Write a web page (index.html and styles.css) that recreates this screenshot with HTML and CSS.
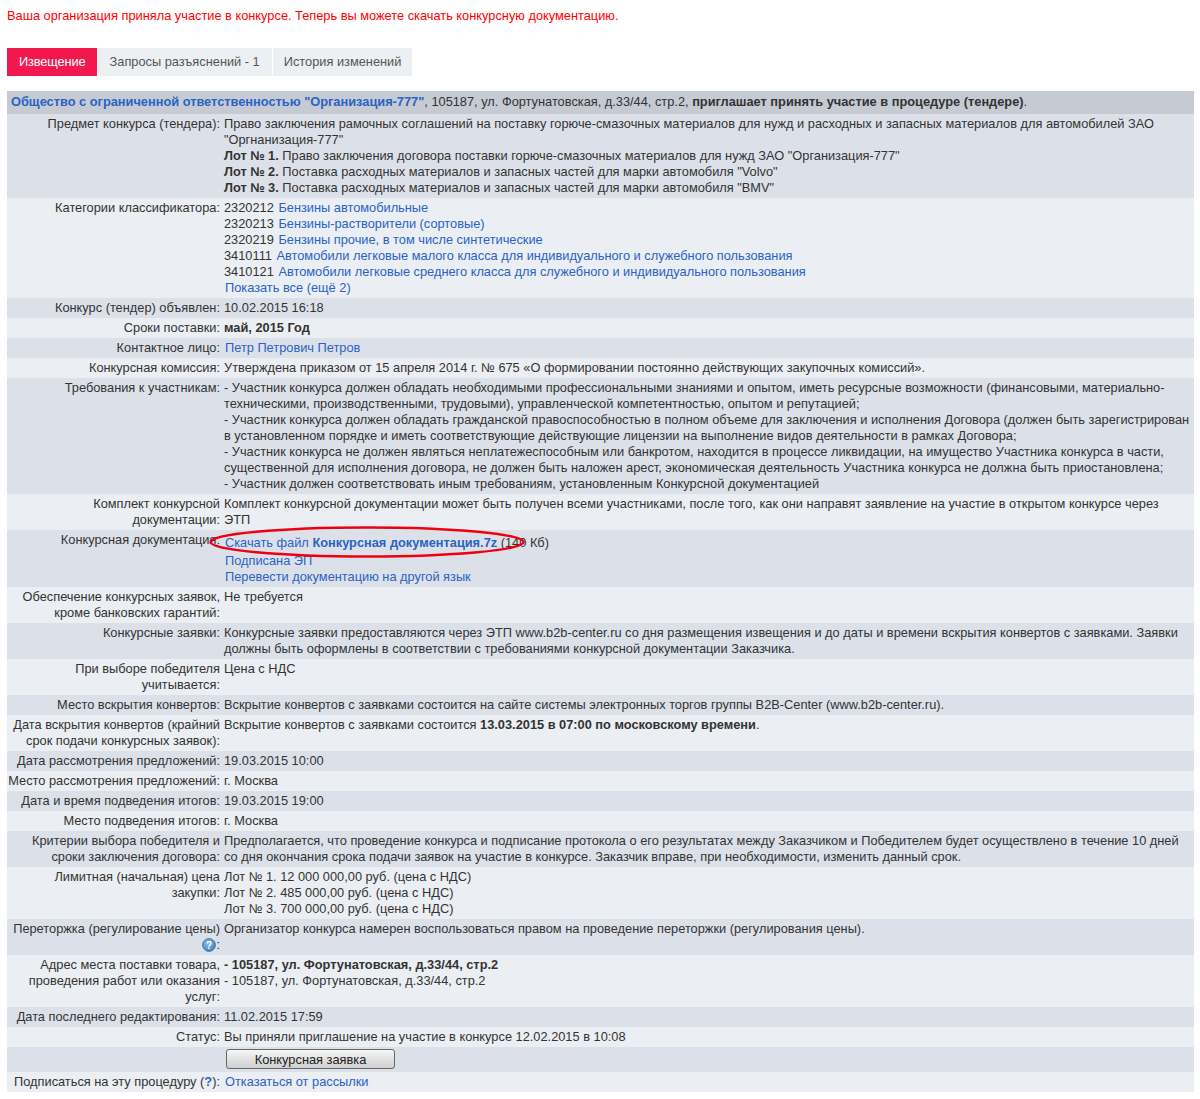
FILE: index.html
```html
<!DOCTYPE html>
<html lang="ru">
<head>
<meta charset="utf-8">
<title>Извещение</title>
<link rel="stylesheet" href="styles.css">
</head>
<body>
<p class="notice">Ваша организация приняла участие в конкурсе. Теперь вы можете скачать конкурсную документацию.</p>
<nav class="tabs">
  <a class="tab active">Извещение</a>
  <a class="tab">Запросы разъяснений - 1</a>
  <a class="tab">История изменений</a>
</nav>
<table class="info">
  <colgroup><col class="c1"><col></colgroup>
  <tr class="head"><td colspan="2"><a class="b">Общество с ограниченной ответственностью "Организация-777"</a>, 105187, ул. Фортунатовская, д.33/44, стр.2, <b>приглашает принять участие в процедуре (тендере)</b>.</td></tr>
  <tr class="o"><th>Предмет конкурса (тендера):</th><td>Право заключения рамочных соглашений на поставку горюче-смазочных материалов для нужд и расходных и запасных материалов для автомобилей ЗАО "Оргнанизация-777"<br><b>Лот № 1.</b> Право заключения договора поставки горюче-смазочных материалов для нужд ЗАО "Организация-777"<br><b>Лот № 2.</b> Поставка расходных материалов и запасных частей для марки автомобиля "Volvo"<br><b>Лот № 3.</b> Поставка расходных материалов и запасных частей для марки автомобиля "BMV"</td></tr>
  <tr class="e"><th>Категории классификатора:</th><td>2320212 <a>Бензины автомобильные</a><br>2320213 <a>Бензины-растворители (сортовые)</a><br>2320219 <a>Бензины прочие, в том числе синтетические</a><br>3410111 <a>Автомобили легковые малого класса для индивидуального и служебного пользования</a><br>3410121 <a>Автомобили легковые среднего класса для служебного и индивидуального пользования</a><br><a>Показать все (ещё 2)</a></td></tr>
  <tr class="o"><th>Конкурс (тендер) объявлен:</th><td>10.02.2015 16:18</td></tr>
  <tr class="e"><th>Сроки поставки:</th><td><b>май, 2015 Год</b></td></tr>
  <tr class="o"><th>Контактное лицо:</th><td><a>Петр Петрович Петров</a></td></tr>
  <tr class="e"><th>Конкурсная комиссия:</th><td>Утверждена приказом от 15 апреля 2014 г. № 675 «О формировании постоянно действующих закупочных комиссий».</td></tr>
  <tr class="o"><th>Требования к участникам:</th><td>- Участник конкурса должен обладать необходимыми профессиональными знаниями и опытом, иметь ресурсные возможности (финансовыми, материально-техническими, производственными, трудовыми), управленческой компетентностью, опытом и репутацией;<br>- Участник конкурса должен обладать гражданской правоспособностью в полном объеме для заключения и исполнения Договора (должен быть зарегистрирован в установленном порядке и иметь соответствующие действующие лицензии на выполнение видов деятельности в рамках Договора;<br>- Участник конкурса не должен являться неплатежеспособным или банкротом, находится в процессе ликвидации, на имущество Участника конкурса в части, существенной для исполнения договора, не должен быть наложен арест, экономическая деятельность Участника конкурса не должна быть приостановлена;<br>- Участник должен соответствовать иным требованиям, установленным Конкурсной документацией</td></tr>
  <tr class="e"><th>Комплект конкурсной документации:</th><td>Комплект конкурсной документации может быть получен всеми участниками, после того, как они направят заявление на участие в открытом конкурсе через<br>ЭТП</td></tr>
  <tr class="o"><th>Конкурсная документация:</th><td><div class="file"><a>Скачать файл <b>Конкурсная документация.7z</b></a> (140 Кб)</div><div><a>Подписана ЭП</a><br><a>Перевести документацию на другой язык</a></div></td></tr>
  <tr class="e"><th>Обеспечение конкурсных заявок, кроме банковских гарантий:</th><td>Не требуется</td></tr>
  <tr class="o"><th>Конкурсные заявки:</th><td>Конкурсные заявки предоставляются через ЭТП www.b2b-center.ru со дня размещения извещения и до даты и времени вскрытия конвертов с заявками. Заявки должны быть оформлены в соответствии с требованиями конкурсной документации Заказчика.</td></tr>
  <tr class="e"><th>При выборе победителя учитывается:</th><td>Цена с НДС</td></tr>
  <tr class="o"><th>Место вскрытия конвертов:</th><td>Вскрытие конвертов с заявками состоится на сайте системы электронных торгов группы B2B-Center (www.b2b-center.ru).</td></tr>
  <tr class="e"><th>Дата вскрытия конвертов (крайний срок подачи конкурсных заявок):</th><td>Вскрытие конвертов с заявками состоится <b>13.03.2015 в 07:00 по московскому времени</b>.</td></tr>
  <tr class="o"><th>Дата рассмотрения предложений:</th><td>19.03.2015 10:00</td></tr>
  <tr class="e"><th>Место рассмотрения предложений:</th><td>г. Москва</td></tr>
  <tr class="o"><th>Дата и время подведения итогов:</th><td>19.03.2015 19:00</td></tr>
  <tr class="e"><th>Место подведения итогов:</th><td>г. Москва</td></tr>
  <tr class="o"><th>Критерии выбора победителя и сроки заключения договора:</th><td>Предполагается, что проведение конкурса и подписание протокола о его результатах между Заказчиком и Победителем будет осуществлено в течение 10 дней со дня окончания срока подачи заявок на участие в конкурсе. Заказчик вправе, при необходимости, изменить данный срок.</td></tr>
  <tr class="e"><th>Лимитная (начальная) цена закупки:</th><td>Лот № 1. 12 000 000,00 руб. (цена с НДС)<br>Лот № 2. 485 000,00 руб. (цена с НДС)<br>Лот № 3. 700 000,00 руб. (цена с НДС)</td></tr>
  <tr class="o"><th>Переторжка (регулирование цены) <svg class="help" viewBox="0 0 14 14" width="14" height="14"><defs><radialGradient id="hg" cx="0.4" cy="0.35" r="0.7"><stop offset="0" stop-color="#8fc0ea"/><stop offset="1" stop-color="#3f7fbb"/></radialGradient></defs><circle cx="7" cy="7" r="6.4" fill="url(#hg)" stroke="#4a7aa8"/><text x="7" y="10.5" text-anchor="middle" class="helpq">?</text></svg>:</th><td>Организатор конкурса намерен воспользоваться правом на проведение переторжки (регулирования цены).</td></tr>
  <tr class="e"><th>Адрес места поставки товара, проведения работ или оказания услуг:</th><td><b>- 105187, ул. Фортунатовская, д.33/44, стр.2</b><br>- 105187, ул. Фортунатовская, д.33/44, стр.2</td></tr>
  <tr class="o"><th>Дата последнего редактирования:</th><td>11.02.2015 17:59</td></tr>
  <tr class="e"><th>Статус:</th><td>Вы приняли приглашение на участие в конкурсе 12.02.2015 в 10:08</td></tr>
  <tr class="o"><th></th><td class="btncell"><button class="btn">Конкурсная заявка</button></td></tr>
  <tr class="e"><th>Подписаться на эту процедуру (<a class="b">?</a>):</th><td><a>Отказаться от рассылки</a></td></tr>
</table>
<svg class="circle" width="326" height="36" viewBox="0 0 326 36"><ellipse cx="163" cy="18" rx="156.5" ry="14.5" fill="none" stroke="#ee0010" stroke-width="2.4"/></svg>
</body>
</html>
```
FILE: styles.css
```css
html, body { margin: 0; padding: 0; background: #fff; }
body {
  position: relative;
  padding: 8px 6px 0 7px;
  font: 12.8px/16px "Liberation Sans", Arial, sans-serif;
  color: #333;
}
.notice { margin: 0 0 24px; color: #f00; }
.tabs { display: flex; gap: 1px; height: 28px; margin-bottom: 15px; }
.tab { display: block; padding: 0 12px; line-height: 28px; background: #ecf0f3; color: #555; }
.tab:last-child { padding: 0 11px; }
.tab.active { background: #f2184f; color: #fff; padding: 0 11px 0 12px; letter-spacing: -0.01em; }
.info { width: 100%; border-collapse: collapse; table-layout: fixed; }
.c1 { width: 215px; }
.info th, .info td { padding: 2px 0 2px 2px; vertical-align: top; }
.info th { font-weight: normal; text-align: right; padding: 2px 2px 2px 0; }
.info .btncell { padding: 2px 0 3px 2px; }
.head td { background: #c6cbd3; padding: 3px 4px 4px; }
.o > * { background: #dce1e9; }
.e > * { background: #ebeef2; }
a { color: #2a62c5; padding-left: 1px; }
a.b { font-weight: bold; padding-left: 0; }
.file { padding: 3px 0 2px; }
.help { vertical-align: -3px; }
.helpq { font: bold 10px "Liberation Sans", sans-serif; fill: #fff; }
.btn {
  display: block; width: 169px; height: 20px; margin: 0 0 0 2px; padding: 0;
  font: 12.8px "Liberation Sans", sans-serif; color: #222;
  background: linear-gradient(#f6f6f6, #cfcfcf);
  border: 1px solid #666; border-radius: 3px;
}
.circle { position: absolute; left: 204px; top: 524px; pointer-events: none; }
```
